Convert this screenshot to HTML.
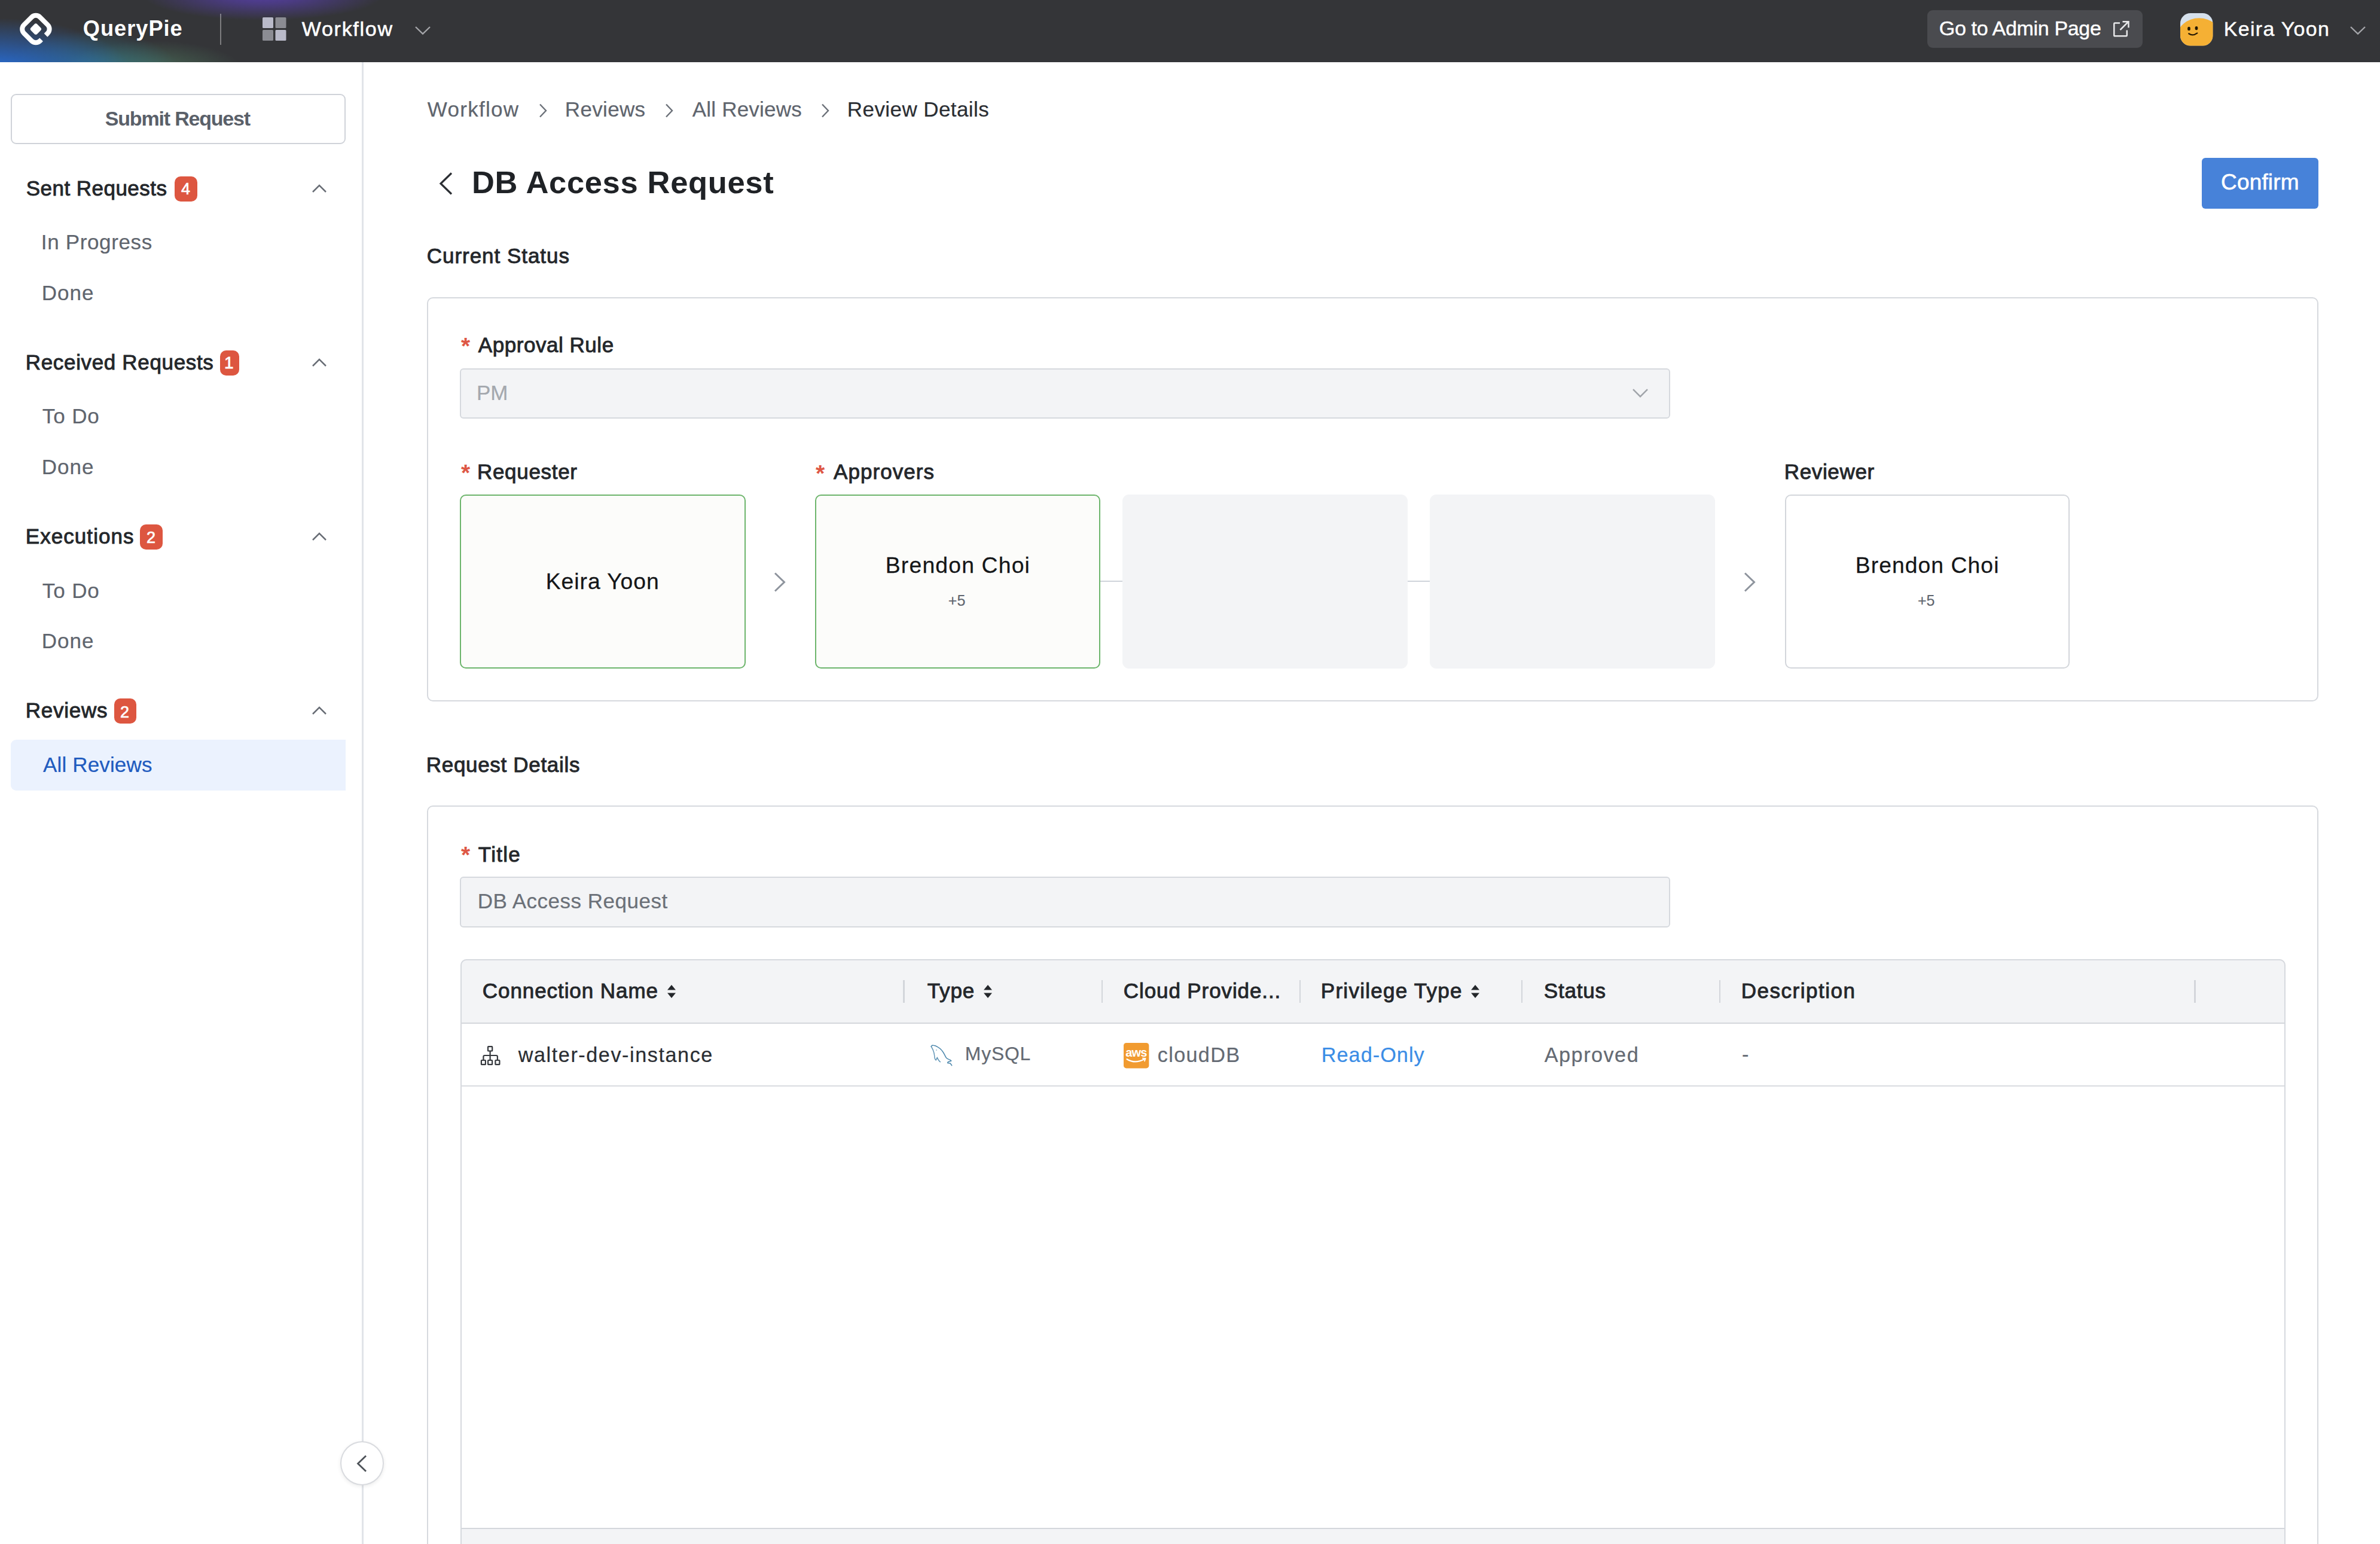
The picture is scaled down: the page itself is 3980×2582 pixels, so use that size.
<!DOCTYPE html>
<html lang="en"><head><meta charset="utf-8"><title>QueryPie - Review Details</title>
<style>
html,body{margin:0;padding:0;background:#fff;}
body{width:3980px;height:2582px;overflow:hidden;font-family:"Liberation Sans",sans-serif;}
#root{position:relative;width:3980px;height:2582px;overflow:hidden;background:#fff;}
#root > header, #root > aside, #root > main{display:contents;}
#root > header > *, #root > aside > *, #root > main > *{position:absolute;box-sizing:border-box;}
.t{white-space:nowrap;display:block;}
svg{overflow:visible;}
.hdr{left:0;top:0;width:3980px;height:103.5px;background:
 radial-gradient(ellipse 200px 42px at 440px -8px, rgba(84,62,160,1) 0%, rgba(84,62,160,.7) 35%, rgba(84,62,160,0) 100%),
 radial-gradient(ellipse 230px 90px at -12px 120px, rgba(40,104,200,1) 0%, rgba(40,104,200,1) 13%, rgba(40,104,200,0) 100%),
 radial-gradient(ellipse 150px 66px at 150px 118px, rgba(48,128,150,.78) 0%, rgba(48,128,150,0) 100%),
 radial-gradient(ellipse 150px 48px at 255px 116px, rgba(80,124,96,.68) 0%, rgba(80,124,96,0) 100%),
 #343538;}
.sbline{left:605.3px;top:103.5px;width:2.6px;height:2480px;background:#e1e4e9;}
.btn-submit{left:17.8px;top:157px;width:560.6px;height:84.3px;border:2px solid #d0d3d9;border-radius:9px;background:#fff;}
.badge{height:42px;top:0;border-radius:10px;background:#dd5640;}
.sel{left:17.6px;top:1237.4px;width:560.7px;height:84.4px;background:#ebf2fe;border-radius:9px 0 0 9px;}
.card{border:2.5px solid #d6d9de;border-radius:10px;background:#fff;}
.inp{border:2.5px solid #d6d9de;border-radius:6px;background:#f3f4f6;}
.box{border-radius:10px;}
.gbox{background:#f3f4f6;border-radius:11px;}
.line{background:#cfd3da;height:2.5px;}
.sep{width:2.5px;height:38px;top:1639px;background:#d3d6db;}

</style></head>
<body>
<div id="root">
<header>
<div class="hdr"></div>
<!-- logo -->
<svg style="left:0;top:0" width="120" height="104" viewBox="0 0 120 104"><g transform="translate(59.9 48.6) rotate(45)"><path d="M19 6 V9 A10 10 0 0 1 9 19 H-9 A10 10 0 0 1 -19 9 V-9 A10 10 0 0 1 -9 -19 H9 A10 10 0 0 1 19 -9 V-4.5" fill="none" stroke="#fff" stroke-width="8"/><rect x="-7.4" y="-7.4" width="14.8" height="14.8" rx="3.4" fill="#fff"/></g></svg>
<div style="left:368.3px;top:22.6px;width:2.2px;height:52.4px;background:rgba(255,255,255,.36)"></div>
<!-- grid icon -->
<svg style="left:438.5px;top:29px" width="40" height="39" viewBox="0 0 40 39"><rect x="0" y="0" width="18" height="18" rx="1.5" fill="#b9bac9"/><rect x="21.5" y="0" width="18" height="18" rx="1.5" fill="#8b8c93"/><rect x="0" y="21" width="18" height="18" rx="1.5" fill="#8b8c93"/><rect x="21.5" y="21" width="18" height="18" rx="1.5" fill="#b9bac9"/></svg>
<svg style="left:693.5px;top:43.5px" width="26" height="14" viewBox="0 0 26 14"><path d="M1 1 L13 12.5 L25 1" fill="none" stroke="#a4a5a9" stroke-width="2.4"/></svg>
<!-- admin button -->
<div style="left:3222.5px;top:16.5px;width:360px;height:63.5px;background:#4a4b4f;border-radius:9px"></div>
<svg style="left:3533.5px;top:35px" width="27" height="27" viewBox="0 0 27 27"><path d="M11 3.5 H2.5 Q1.3 3.5 1.3 4.7 V24 Q1.3 25.3 2.5 25.3 H21.5 Q22.8 25.3 22.8 24 V15.5" fill="none" stroke="#e8e8ea" stroke-width="2.5"/><path d="M11.5 15 L25 1.5 M15.5 1.3 H25.5 V11.3" fill="none" stroke="#e8e8ea" stroke-width="2.5"/></svg>
<!-- avatar -->
<svg style="left:3645.5px;top:21.7px" width="54.5" height="54.5" viewBox="0 0 54.5 54.5"><defs><clipPath id="avc"><rect x="0" y="0" width="54.5" height="54.5" rx="17"/></clipPath></defs><g clip-path="url(#avc)"><rect width="54.5" height="54.5" fill="#d5e0ec"/><ellipse cx="31.5" cy="40.3" rx="37" ry="32" fill="#f5b034"/></g><ellipse cx="14.5" cy="25.9" rx="2.4" ry="3.2" fill="#241803"/><ellipse cx="27" cy="25.1" rx="2.4" ry="3.2" fill="#241803"/><path d="M14.3 34.2 Q21 38.8 28.3 33.4" fill="none" stroke="#2a1c05" stroke-width="2.3" stroke-linecap="round"/></svg>
<svg style="left:3930px;top:44px" width="26" height="14" viewBox="0 0 26 14"><path d="M1 1 L13 12.5 L25 1" fill="none" stroke="#a4a5a9" stroke-width="2.4"/></svg>
<span class="t" id="t0" style="left:138.8px;top:22.3px;font-size:36.2px;line-height:51px;color:#fff;font-weight:700;letter-spacing:1.00px;">QueryPie</span>
<span class="t" id="t1" style="left:504.8px;top:23.5px;font-size:34px;line-height:48px;color:#fff;letter-spacing:1.71px;-webkit-text-stroke:.6px #fff;">Workflow</span>
<span class="t" id="t2" style="left:3242.8px;top:23.2px;font-size:34px;line-height:48px;color:#fff;-webkit-text-stroke:0.24px #fff;letter-spacing:-0.33px;-webkit-text-stroke:.45px #fff;">Go to Admin Page</span>
<span class="t" id="t3" style="left:3718.8px;top:23.5px;font-size:34px;line-height:48px;color:#fff;-webkit-text-stroke:0.24px #fff;letter-spacing:1.28px;-webkit-text-stroke:.45px #fff;">Keira Yoon</span>
</header>
<aside>
<!-- sidebar -->
<div class="sbline"></div>
<div class="btn-submit"></div>
<div class="badge" style="left:291.5px;top:295px;width:38px"></div>
<div class="badge" style="left:368.2px;top:586px;width:31.8px"></div>
<div class="badge" style="left:234px;top:877px;width:38px"></div>
<div class="badge" style="left:190.5px;top:1168.3px;width:37.3px"></div>
<svg class="chu" style="left:522px;top:307.5px" width="24" height="14" viewBox="0 0 24 14"><path d="M1 13 L12 2 L23 13" fill="none" stroke="#686d75" stroke-width="2.5"/></svg>
<svg class="chu" style="left:522px;top:598.5px" width="24" height="14" viewBox="0 0 24 14"><path d="M1 13 L12 2 L23 13" fill="none" stroke="#686d75" stroke-width="2.5"/></svg>
<svg class="chu" style="left:522px;top:889.5px" width="24" height="14" viewBox="0 0 24 14"><path d="M1 13 L12 2 L23 13" fill="none" stroke="#686d75" stroke-width="2.5"/></svg>
<svg class="chu" style="left:522px;top:1181px" width="24" height="14" viewBox="0 0 24 14"><path d="M1 13 L12 2 L23 13" fill="none" stroke="#686d75" stroke-width="2.5"/></svg>
<div class="sel"></div>
<!-- collapse button -->
<div style="left:569px;top:2410px;width:73px;height:74px;border-radius:50%;background:#fff;border:2px solid #d9dbdf;box-shadow:0 2px 6px rgba(0,0,0,.08)"></div>
<svg style="left:596px;top:2432.5px" width="18" height="29" viewBox="0 0 18 29"><path d="M16 1.5 L2.5 14.5 L16 27.5" fill="none" stroke="#4d5258" stroke-width="2.8"/></svg>
<span class="t" id="t4" style="left:175.8px;top:174.2px;font-size:34px;line-height:48px;color:#5a6069;font-weight:700;letter-spacing:-1.19px;">Submit Request</span>
<span class="t" id="t5" style="left:43.8px;top:289.7px;font-size:35px;line-height:49px;color:#24272b;-webkit-text-stroke:0.94px #24272b;letter-spacing:0.46px;">Sent Requests</span>
<span class="t" id="t6" style="left:303.0px;top:296.9px;font-size:27px;line-height:38px;color:#fff;-webkit-text-stroke:0.73px #fff;">4</span>
<span class="t" id="t7" style="left:68.8px;top:380.2px;font-size:35px;line-height:49px;color:#5f656e;-webkit-text-stroke:0.24px #5f656e;letter-spacing:0.65px;">In Progress</span>
<span class="t" id="t8" style="left:69.8px;top:464.8px;font-size:35px;line-height:49px;color:#5f656e;-webkit-text-stroke:0.24px #5f656e;letter-spacing:1.00px;">Done</span>
<span class="t" id="t9" style="left:42.8px;top:580.9px;font-size:35px;line-height:49px;color:#24272b;-webkit-text-stroke:0.94px #24272b;letter-spacing:0.66px;">Received Requests</span>
<span class="t" id="t10" style="left:375.0px;top:587.0px;font-size:28px;line-height:39px;color:#fff;-webkit-text-stroke:0.76px #fff;">1</span>
<span class="t" id="t11" style="left:70.8px;top:671.4px;font-size:35px;line-height:49px;color:#5f656e;-webkit-text-stroke:0.24px #5f656e;letter-spacing:0.88px;">To Do</span>
<span class="t" id="t12" style="left:69.8px;top:756.0px;font-size:35px;line-height:49px;color:#5f656e;-webkit-text-stroke:0.24px #5f656e;letter-spacing:1.00px;">Done</span>
<span class="t" id="t13" style="left:42.8px;top:872.1px;font-size:35px;line-height:49px;color:#24272b;-webkit-text-stroke:0.94px #24272b;letter-spacing:1.06px;">Executions</span>
<span class="t" id="t14" style="left:245.0px;top:879.6px;font-size:27px;line-height:38px;color:#fff;-webkit-text-stroke:0.73px #fff;">2</span>
<span class="t" id="t15" style="left:70.8px;top:962.6px;font-size:35px;line-height:49px;color:#5f656e;-webkit-text-stroke:0.24px #5f656e;letter-spacing:0.88px;">To Do</span>
<span class="t" id="t16" style="left:69.8px;top:1047.2px;font-size:35px;line-height:49px;color:#5f656e;-webkit-text-stroke:0.24px #5f656e;letter-spacing:1.00px;">Done</span>
<span class="t" id="t17" style="left:42.8px;top:1163.2px;font-size:35px;line-height:49px;color:#24272b;-webkit-text-stroke:0.94px #24272b;letter-spacing:0.75px;">Reviews</span>
<span class="t" id="t18" style="left:201.0px;top:1171.5px;font-size:27px;line-height:38px;color:#fff;-webkit-text-stroke:0.73px #fff;">2</span>
<span class="t" id="t19" style="left:72.0px;top:1253.7px;font-size:35px;line-height:49px;color:#1f5bbf;-webkit-text-stroke:0.24px #1f5bbf;letter-spacing:0.15px;">All Reviews</span>
</aside>
<main>
<!-- breadcrumb chevrons -->
<svg style="left:901px;top:173px" width="14" height="24" viewBox="0 0 14 24"><path d="M2 1.5 L12 12 L2 22.5" fill="none" stroke="#6b7078" stroke-width="2.4"/></svg>
<svg style="left:1112px;top:173px" width="14" height="24" viewBox="0 0 14 24"><path d="M2 1.5 L12 12 L2 22.5" fill="none" stroke="#6b7078" stroke-width="2.4"/></svg>
<svg style="left:1373px;top:173px" width="14" height="24" viewBox="0 0 14 24"><path d="M2 1.5 L12 12 L2 22.5" fill="none" stroke="#6b7078" stroke-width="2.4"/></svg>
<!-- back arrow -->
<svg style="left:734px;top:287.5px" width="23" height="38" viewBox="0 0 23 38"><path d="M21 1.5 L3 19 L21 36.5" fill="none" stroke="#2b2e33" stroke-width="3.2"/></svg>
<!-- confirm -->
<div style="left:3682.2px;top:264.1px;width:194.6px;height:85.2px;background:#4782d9;border-radius:6px"></div>

<!-- card 1 -->
<div class="card" style="left:714px;top:496.5px;width:3163px;height:676px"></div>
<div class="inp" style="left:769px;top:615.5px;width:2024px;height:84.5px"></div>
<svg style="left:2730px;top:649.5px" width="26" height="15" viewBox="0 0 26 15"><path d="M1 1.2 L13 13.2 L25 1.2" fill="none" stroke="#a0a4aa" stroke-width="2.5"/></svg>
<div class="box" style="left:769.3px;top:826.6px;width:477.4px;height:291.6px;border:2.6px solid #6db56c;background:#fcfcfa"></div>
<svg style="left:1294px;top:956.5px" width="20" height="33" viewBox="0 0 20 33"><path d="M2 1.5 L17.5 16.5 L2 31.5" fill="none" stroke="#8e949d" stroke-width="3"/></svg>
<div class="box" style="left:1362.8px;top:826.6px;width:477.4px;height:291.6px;border:2.6px solid #6db56c;background:#fcfcfa"></div>
<div class="line" style="left:1840px;top:970.8px;width:37px"></div>
<div class="gbox" style="left:1876.5px;top:827px;width:477.5px;height:291px"></div>
<div class="line" style="left:2354px;top:970.8px;width:37px"></div>
<div class="gbox" style="left:2391px;top:827px;width:476.5px;height:291px"></div>
<svg style="left:2916px;top:956.5px" width="20" height="33" viewBox="0 0 20 33"><path d="M2 1.5 L17.5 16.5 L2 31.5" fill="none" stroke="#8e949d" stroke-width="3"/></svg>
<div class="box" style="left:2984.8px;top:826.8px;width:476px;height:291.2px;border:2.5px solid #d3d6db;background:#fff"></div>

<!-- card 2 -->
<div class="card" style="left:714px;top:1347px;width:3163px;height:1400px"></div>
<div class="inp" style="left:769px;top:1465.5px;width:2024px;height:85.5px"></div>
<!-- table -->
<div style="left:770px;top:1604px;width:3051.5px;height:1100px;border-radius:10px 10px 0 0;background:#fff;overflow:hidden"><div style="position:absolute;left:0;top:0;width:100%;height:106px;background:#f3f4f6"></div><div style="position:absolute;left:0;top:106px;width:100%;height:2.2px;background:#d4d7dc"></div><div style="position:absolute;left:0;top:211px;width:100%;height:2.2px;background:#d9dce0"></div><div style="position:absolute;left:0;top:950.5px;width:100%;height:2.2px;background:#d4d7dc"></div><div style="position:absolute;left:0;top:952.7px;width:100%;height:60px;background:#f3f4f6"></div></div>
<div style="left:770px;top:1604px;width:3051.5px;height:1100px;border:2.5px solid #d6d9de;border-radius:10px 10px 0 0;background:transparent"></div>
<div class="sep" style="left:1510px"></div>
<div class="sep" style="left:1841.5px"></div>
<div class="sep" style="left:2172.5px"></div>
<div class="sep" style="left:2543.5px"></div>
<div class="sep" style="left:2874.5px"></div>
<div class="sep" style="left:3669px"></div>
<!-- sort icons -->
<svg style="left:1115px;top:1646px" width="16" height="24" viewBox="0 0 16 24"><path d="M8 1 L15 9.5 H1 Z M8 23 L15 14.5 H1 Z" fill="#24272b"/></svg>
<svg style="left:1644px;top:1646px" width="16" height="24" viewBox="0 0 16 24"><path d="M8 1 L15 9.5 H1 Z M8 23 L15 14.5 H1 Z" fill="#24272b"/></svg>
<svg style="left:2458.5px;top:1646px" width="16" height="24" viewBox="0 0 16 24"><path d="M8 1 L15 9.5 H1 Z M8 23 L15 14.5 H1 Z" fill="#24272b"/></svg>
<!-- row icons -->
<svg style="left:790px;top:1735px" width="60" height="60" viewBox="0 0 60 60"><g fill="none" stroke="#35383d" stroke-width="2.2" stroke-linejoin="round"><rect x="26" y="15.1" width="7.2" height="7.4" rx=".8"/><rect x="14.9" y="38" width="7" height="7.2" rx=".8"/><rect x="26.1" y="38" width="7" height="7.2" rx=".8"/><rect x="38.4" y="38" width="7" height="7.2" rx=".8"/><path d="M29.6 22.5 V38 M18.4 38 V32.2 Q18.4 30 20.6 30 H39.7 Q41.9 30 41.9 32.2 V38"/></g></svg>
<svg style="left:1540px;top:1730px" width="60" height="60" viewBox="0 0 60 60"><g fill="none" stroke="#4a86ac" stroke-width="1.5" stroke-linejoin="round" stroke-linecap="round"><path d="M17.2 20 C18 18.3 19.4 17.8 20.8 18.1 C23.5 18.6 25.8 19.4 27.7 20.6 C31 22.4 33.4 24.4 35.3 26.9 C37.2 29.2 38.4 31.4 39.5 33.6 C40.6 36 41.4 38 42.9 39.5 C44.6 41.1 46.8 41.6 48.7 42.4 L50.8 44.1 L45.4 45.8 L44.5 47.5 L49.2 48.3 L51.7 51.7"/><path d="M17.2 20 C18.6 22.4 20 24.8 21 27.7 C22 30.4 22.4 32.8 22.7 35.3 C22.8 36.8 22.8 38.2 23.1 39.5 C23.5 41 24.2 42 25.2 42.9 L27.3 38.2 C27.8 39.6 28.3 40.8 29 42 C29.9 43.5 31 44.7 32.4 45.8" opacity=".85"/></g><circle cx="26" cy="26" r="0.9" fill="#4a86ac" opacity=".6"/></svg>
<svg style="left:1879.3px;top:1744px" width="42.4" height="42.4" viewBox="0 0 42.4 42.4"><rect width="42.4" height="42.4" rx="4.5" fill="#f19b30"/><text x="21" y="23.2" font-family="Liberation Sans, sans-serif" font-size="20" font-weight="700" fill="#fff" text-anchor="middle" letter-spacing="-0.8">aws</text><path d="M5.5 27.2 Q19 35.5 34 27.6" fill="none" stroke="#fff" stroke-width="2.2" stroke-linecap="round"/><path d="M31.8 25.6 L36.6 26 L35 30.4" fill="none" stroke="#fff" stroke-width="1.8" stroke-linejoin="round" stroke-linecap="round"/></svg>
<span class="t" id="t20" style="left:714.8px;top:157.5px;font-size:35px;line-height:49px;color:#5f656e;-webkit-text-stroke:0.24px #5f656e;letter-spacing:1.29px;">Workflow</span>
<span class="t" id="t21" style="left:944.8px;top:157.5px;font-size:35px;line-height:49px;color:#5f656e;-webkit-text-stroke:0.24px #5f656e;letter-spacing:0.33px;">Reviews</span>
<span class="t" id="t22" style="left:1157.8px;top:157.5px;font-size:35px;line-height:49px;color:#5f656e;-webkit-text-stroke:0.24px #5f656e;letter-spacing:0.20px;">All Reviews</span>
<span class="t" id="t23" style="left:1416.8px;top:157.5px;font-size:35px;line-height:49px;color:#2b2e33;-webkit-text-stroke:0.24px #2b2e33;letter-spacing:0.42px;">Review Details</span>
<span class="t" id="t24" style="left:789.0px;top:268.1px;font-size:52.5px;line-height:74px;color:#1f2226;font-weight:700;letter-spacing:0.66px;">DB Access Request</span>
<span class="t" id="t25" style="left:3714.0px;top:279.0px;font-size:37px;line-height:52px;color:#fff;letter-spacing:0.17px;-webkit-text-stroke:.6px #fff;">Confirm</span>
<span class="t" id="t26" style="left:713.8px;top:403.3px;font-size:35px;line-height:49px;color:#24272b;-webkit-text-stroke:0.94px #24272b;letter-spacing:0.96px;">Current Status</span>
<span class="t" id="t27" style="left:771.0px;top:551.3px;font-size:39px;line-height:55px;color:#de5745;font-weight:700;">*</span>
<span class="t" id="t28" style="left:799.8px;top:552.2px;font-size:35px;line-height:49px;color:#24272b;-webkit-text-stroke:0.94px #24272b;letter-spacing:0.54px;">Approval Rule</span>
<span class="t" id="t29" style="left:797.0px;top:631.7px;font-size:35px;line-height:49px;color:#a4a8ae;-webkit-text-stroke:0.24px #a4a8ae;">PM</span>
<span class="t" id="t30" style="left:771.0px;top:763.3px;font-size:39px;line-height:55px;color:#de5745;font-weight:700;">*</span>
<span class="t" id="t31" style="left:798.0px;top:764.2px;font-size:35px;line-height:49px;color:#24272b;-webkit-text-stroke:0.94px #24272b;letter-spacing:0.69px;">Requester</span>
<span class="t" id="t32" style="left:912.8px;top:946.2px;font-size:37.3px;line-height:52px;color:#141618;-webkit-text-stroke:0.26px #141618;letter-spacing:0.94px;">Keira Yoon</span>
<span class="t" id="t33" style="left:1364.0px;top:763.8px;font-size:39px;line-height:55px;color:#de5745;font-weight:700;">*</span>
<span class="t" id="t34" style="left:1394.0px;top:764.2px;font-size:35px;line-height:49px;color:#24272b;-webkit-text-stroke:0.94px #24272b;letter-spacing:1.06px;">Approvers</span>
<span class="t" id="t35" style="left:1480.8px;top:919.2px;font-size:37.3px;line-height:52px;color:#141618;-webkit-text-stroke:0.26px #141618;letter-spacing:1.18px;">Brendon Choi</span>
<span class="t" id="t36" style="left:1585.8px;top:986.7px;font-size:25px;line-height:35px;color:#5f656e;-webkit-text-stroke:0.18px #5f656e;">+5</span>
<span class="t" id="t37" style="left:2983.8px;top:764.2px;font-size:35px;line-height:49px;color:#24272b;-webkit-text-stroke:0.94px #24272b;letter-spacing:0.64px;">Reviewer</span>
<span class="t" id="t38" style="left:3102.8px;top:919.2px;font-size:37.3px;line-height:52px;color:#141618;-webkit-text-stroke:0.26px #141618;letter-spacing:1.05px;">Brendon Choi</span>
<span class="t" id="t39" style="left:3207.0px;top:986.7px;font-size:25px;line-height:35px;color:#5f656e;-webkit-text-stroke:0.18px #5f656e;">+5</span>
<span class="t" id="t40" style="left:712.8px;top:1254.0px;font-size:35px;line-height:49px;color:#24272b;-webkit-text-stroke:0.94px #24272b;letter-spacing:0.68px;">Request Details</span>
<span class="t" id="t41" style="left:771.0px;top:1402.3px;font-size:39px;line-height:55px;color:#de5745;font-weight:700;">*</span>
<span class="t" id="t42" style="left:799.8px;top:1403.9px;font-size:35px;line-height:49px;color:#24272b;-webkit-text-stroke:0.94px #24272b;letter-spacing:1.25px;">Title</span>
<span class="t" id="t43" style="left:798.8px;top:1481.5px;font-size:35px;line-height:49px;color:#6b7078;-webkit-text-stroke:0.24px #6b7078;letter-spacing:0.50px;">DB Access Request</span>
<span class="t" id="t44" style="left:806.8px;top:1632.2px;font-size:35px;line-height:49px;color:#24272b;-webkit-text-stroke:0.94px #24272b;letter-spacing:0.93px;">Connection Name</span>
<span class="t" id="t45" style="left:1550.8px;top:1632.2px;font-size:35px;line-height:49px;color:#24272b;-webkit-text-stroke:0.94px #24272b;letter-spacing:0.83px;">Type</span>
<span class="t" id="t46" style="left:1878.8px;top:1632.2px;font-size:35px;line-height:49px;color:#24272b;-webkit-text-stroke:0.94px #24272b;letter-spacing:0.90px;">Cloud Provide...</span>
<span class="t" id="t47" style="left:2208.8px;top:1632.2px;font-size:35px;line-height:49px;color:#24272b;-webkit-text-stroke:0.94px #24272b;letter-spacing:1.27px;">Privilege Type</span>
<span class="t" id="t48" style="left:2581.8px;top:1632.2px;font-size:35px;line-height:49px;color:#24272b;-webkit-text-stroke:0.94px #24272b;letter-spacing:0.80px;">Status</span>
<span class="t" id="t49" style="left:2911.8px;top:1632.2px;font-size:35px;line-height:49px;color:#24272b;-webkit-text-stroke:0.94px #24272b;letter-spacing:1.50px;">Description</span>
<span class="t" id="t50" style="left:866.8px;top:1739.5px;font-size:34.2px;line-height:48px;color:#2b2e33;-webkit-text-stroke:0.24px #2b2e33;letter-spacing:1.56px;">walter-dev-instance</span>
<span class="t" id="t51" style="left:1613.8px;top:1739.5px;font-size:31.8px;line-height:45px;color:#646a73;-webkit-text-stroke:0.22px #646a73;letter-spacing:0.85px;">MySQL</span>
<span class="t" id="t52" style="left:1935.8px;top:1739.5px;font-size:34.2px;line-height:48px;color:#646a73;-webkit-text-stroke:0.24px #646a73;letter-spacing:1.33px;">cloudDB</span>
<span class="t" id="t53" style="left:2209.8px;top:1739.5px;font-size:34.2px;line-height:48px;color:#3b8de6;-webkit-text-stroke:0.24px #3b8de6;letter-spacing:1.06px;">Read-Only</span>
<span class="t" id="t54" style="left:2582.8px;top:1739.5px;font-size:34.2px;line-height:48px;color:#646a73;-webkit-text-stroke:0.24px #646a73;letter-spacing:1.50px;">Approved</span>
<span class="t" id="t55" style="left:2913.0px;top:1739.2px;font-size:34.2px;line-height:48px;color:#646a73;-webkit-text-stroke:0.24px #646a73;">-</span>
</main>
</div>
</body></html>
